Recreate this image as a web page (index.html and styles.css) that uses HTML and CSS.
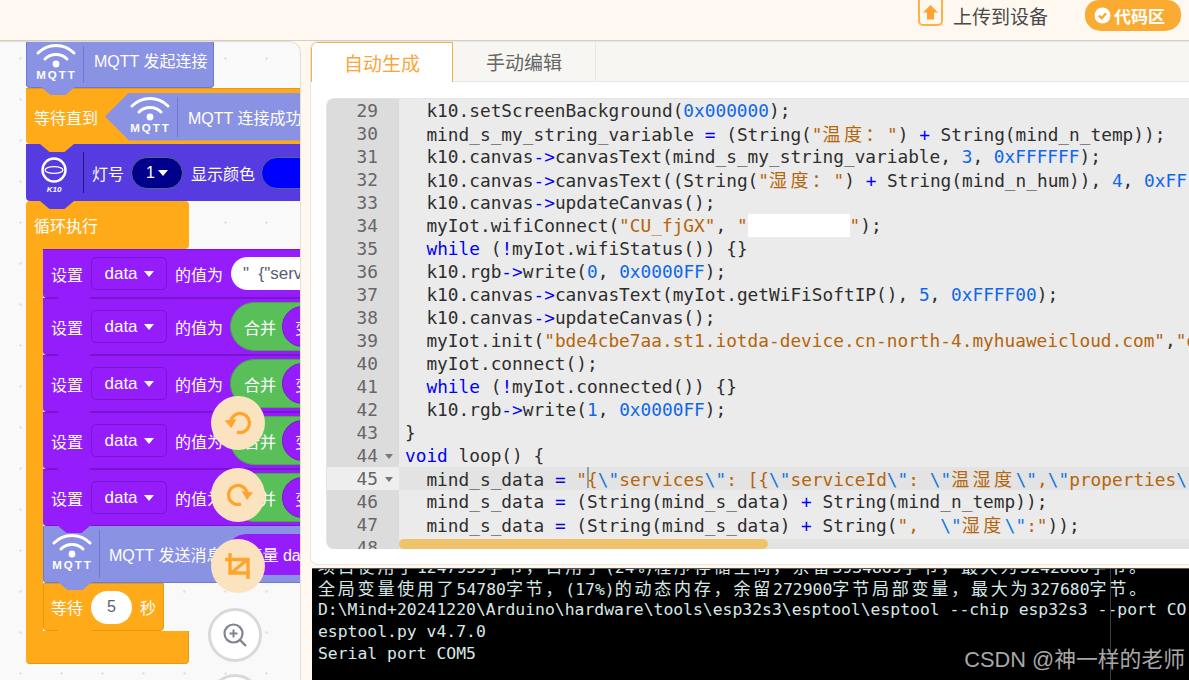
FILE: index.html

```html
<!DOCTYPE html>
<html lang="zh-CN">
<head>
  <meta charset="UTF-8" />
  <title>Mind+ 代码区</title>
  <link rel="stylesheet" href="styles.css">
</head>
<body>
  <svg class="defs" width="0" height="0">
    <symbol id="mqtt" viewBox="0 0 46 46">
      <path d="M5 12 C15 2 31 2 41 12" fill="none" stroke="#fff" stroke-width="3" stroke-linecap="round"/>
      <path d="M12 18 C18 12 28 12 34 18" fill="none" stroke="#fff" stroke-width="3" stroke-linecap="round"/>
      <circle cx="23" cy="23" r="3.4" fill="#fff"/>
      <text x="23.5" y="38" text-anchor="middle" class="mqtt-label">MQTT</text>
    </symbol>
  </svg>

  <header class="topbar">
    <div class="upload">
      <span class="upload-icon">
        <svg width="17" height="17" viewBox="0 0 17 17"><path d="M8.5 1 L16 8.5 H12 V15.5 H5 V8.5 H1 Z" fill="#ffa230"/></svg>
      </span>
      上传到设备
    </div>
    <div class="code-pill">
      <svg width="17" height="17" viewBox="0 0 17 17"><circle cx="8.5" cy="8.5" r="8" fill="#fff"/><path d="M4.8 8.6 L7.6 11.2 L12 6.4" fill="none" stroke="#fbab32" stroke-width="2.4"/></svg>
      代码区
    </div>
  </header>

  <main class="main">
    <section class="workspace">
      <div class="block mqtt-block first-block">
        <svg class="mqtt-icon" width="46" height="46"><use href="#mqtt"/></svg>
        <span class="sep"></span>
        <span class="first-label">MQTT 发起连接</span>
      </div>
      <div class="block wait-until">
        <span>等待直到</span>
        <div class="hex">
          <svg class="mqtt-icon" width="46" height="46"><use href="#mqtt"/></svg>
          <span class="sep"></span>
          <span>MQTT 连接成功</span>
        </div>
      </div>
      <div class="block k10-block">
        <div class="k10-icon">
          <svg width="28" height="28" viewBox="0 0 28 28">
            <circle cx="14" cy="14" r="11.5" fill="none" stroke="#fff" stroke-width="2.4"/>
            <ellipse cx="14" cy="14" rx="9" ry="3.4" fill="none" stroke="#fff" stroke-width="1.2"/>
          </svg>
          <i>K10</i>
        </div>
        <span class="sep dark"></span>
        <span>灯号</span>
        <span class="num-drop">1 <em class="caret"></em></span>
        <span>显示颜色</span>
        <span class="color-pill"></span>
      </div>

      <div class="loop">
        <div class="block loop-head">循环执行</div>
        <div class="loop-body">
          <div class="block set-block set-first">
            <span>设置</span>
            <span class="var-drop">data <em class="caret"></em></span>
            <span>的值为</span>
            <span class="text-pill">"&nbsp;&nbsp;{"services</span>
          </div>
          <div class="block set-block">
            <span>设置</span>
            <span class="var-drop">data <em class="caret"></em></span>
            <span>的值为</span>
            <span class="join"><span>合并</span><span class="join-var">变量</span></span>
          </div>
          <div class="block set-block">
            <span>设置</span>
            <span class="var-drop">data <em class="caret"></em></span>
            <span>的值为</span>
            <span class="join"><span>合并</span><span class="join-var">变量</span></span>
          </div>
          <div class="block set-block">
            <span>设置</span>
            <span class="var-drop">data <em class="caret"></em></span>
            <span>的值为</span>
            <span class="join"><span>合并</span><span class="join-var">变量</span></span>
          </div>
          <div class="block set-block">
            <span>设置</span>
            <span class="var-drop">data <em class="caret"></em></span>
            <span>的值为</span>
            <span class="join"><span>合并</span><span class="join-var">变量</span></span>
          </div>
          <div class="block mqtt-block send-block">
            <svg class="mqtt-icon" width="46" height="46"><use href="#mqtt"/></svg>
            <span class="sep"></span>
            <span>MQTT 发送消息</span>
            <span class="send-var">变量 data</span>
          </div>
          <div class="block wait-block">
            <span>等待</span>
            <span class="num-pill">5</span>
            <span>秒</span>
          </div>
        </div>
        <div class="block loop-foot"></div>
      </div>

      <button class="tool tool-undo">
        <svg width="30" height="30" viewBox="0 0 30 30"><path d="M8 12 A9.5 9.5 0 1 1 14 24" fill="none" stroke="#ffa52e" stroke-width="3.2"/><path d="M1.5 12.5 L8.5 20 L13.5 11 Z" fill="#ffa52e"/></svg>
      </button>
      <button class="tool tool-redo">
        <svg width="30" height="30" viewBox="0 0 30 30"><path d="M24 12 A9.5 9.5 0 1 0 18 24" fill="none" stroke="#ffa52e" stroke-width="3.2"/><path d="M18.5 11 L24 20 L30 12.5 Z" fill="#ffa52e"/></svg>
      </button>
      <button class="tool tool-crop">
        <svg width="30" height="30" viewBox="0 0 30 30"><path d="M7 2 V22 H27 M2 8.5 H25 V28 M8 22 L24 9" fill="none" stroke="#ffa52e" stroke-width="3.4"/></svg>
      </button>
      <button class="tool tool-zoom">
        <svg width="26" height="26" viewBox="0 0 26 26"><circle cx="11.5" cy="11.5" r="9" fill="none" stroke="#7f8590" stroke-width="2.2"/><path d="M18 18 L24 24" stroke="#7f8590" stroke-width="2.4"/><path d="M7.5 11.5 H15.5 M11.5 7.5 V15.5" stroke="#7f8590" stroke-width="2"/></svg>
      </button>
      <button class="tool tool-zoom-out"></button>
    </section>

    <section class="right">
      <div class="editor-panel">
        <div class="tabs">
          <div class="tab tab-active">自动生成</div>
          <div class="tab">手动编辑</div>
        </div>
        <div class="editor-wrap">
          <div class="editor">
            <div class="row"><span class="ln">29</span><span class="tx">  k10.setScreenBackground(<span class="n">0x000000</span>);</span></div>
            <div class="row"><span class="ln">30</span><span class="tx">  mind_s_my_string_variable <span class="o">=</span> (String(<span class="s">"<span class="zh">温度：</span>"</span>) <span class="o">+</span> String(mind_n_temp));</span></div>
            <div class="row"><span class="ln">31</span><span class="tx">  k10.canvas<span class="o">-&gt;</span>canvasText(mind_s_my_string_variable, <span class="n">3</span>, <span class="n">0xFFFFFF</span>);</span></div>
            <div class="row"><span class="ln">32</span><span class="tx">  k10.canvas<span class="o">-&gt;</span>canvasText((String(<span class="s">"<span class="zh">湿度：</span>"</span>) <span class="o">+</span> String(mind_n_hum)), <span class="n">4</span>, <span class="n">0xFF</span></span></div>
            <div class="row"><span class="ln">33</span><span class="tx">  k10.canvas<span class="o">-&gt;</span>updateCanvas();</span></div>
            <div class="row"><span class="ln">34</span><span class="tx">  myIot.wifiConnect(<span class="s">"CU_fjGX"</span>, <span class="s">"<span class="redact"></span>"</span>);</span></div>
            <div class="row"><span class="ln">35</span><span class="tx">  <span class="k">while</span> (<span class="o">!</span>myIot.wifiStatus()) {}</span></div>
            <div class="row"><span class="ln">36</span><span class="tx">  k10.rgb<span class="o">-&gt;</span>write(<span class="n">0</span>, <span class="n">0x0000FF</span>);</span></div>
            <div class="row"><span class="ln">37</span><span class="tx">  k10.canvas<span class="o">-&gt;</span>canvasText(myIot.getWiFiSoftIP(), <span class="n">5</span>, <span class="n">0xFFFF00</span>);</span></div>
            <div class="row"><span class="ln">38</span><span class="tx">  k10.canvas<span class="o">-&gt;</span>updateCanvas();</span></div>
            <div class="row"><span class="ln">39</span><span class="tx">  myIot.init(<span class="s">"bde4cbe7aa.st1.iotda-device.cn-north-4.myhuaweicloud.com"</span>,<span class="s">"d</span></span></div>
            <div class="row"><span class="ln">40</span><span class="tx">  myIot.connect();</span></div>
            <div class="row"><span class="ln">41</span><span class="tx">  <span class="k">while</span> (<span class="o">!</span>myIot.connected()) {}</span></div>
            <div class="row"><span class="ln">42</span><span class="tx">  k10.rgb<span class="o">-&gt;</span>write(<span class="n">1</span>, <span class="n">0x0000FF</span>);</span></div>
            <div class="row"><span class="ln">43</span><span class="tx">}</span></div>
            <div class="row"><span class="ln fold">44</span><span class="tx"><span class="k">void</span> loop() {</span></div>
            <div class="row row-active"><span class="ln fold">45</span><span class="tx">  mind_s_data <span class="o">=</span> <span class="s">"<span class="cursor"></span>{<span class="e">\"</span>services<span class="e">\"</span>: [{<span class="e">\"</span>serviceId<span class="e">\"</span>: <span class="e">\"</span><span class="zh">温湿度</span><span class="e">\"</span>,<span class="e">\"</span>properties<span class="e">\</span></span></span></div>
            <div class="row"><span class="ln">46</span><span class="tx">  mind_s_data <span class="o">=</span> (String(mind_s_data) <span class="o">+</span> String(mind_n_temp));</span></div>
            <div class="row"><span class="ln">47</span><span class="tx">  mind_s_data <span class="o">=</span> (String(mind_s_data) <span class="o">+</span> String(<span class="s">",  <span class="e">\"</span><span class="zh">湿度</span><span class="e">\"</span>:"</span>));</span></div>
            <div class="row"><span class="ln">48</span><span class="tx">  mind_s_data <span class="o">=</span> (String(mind_s_data) <span class="o">+</span> String(mind_n_hum));</span></div>
            <div class="scroll-track"><div class="scroll-thumb"></div></div>
          </div>
        </div>
      </div>

      <div class="terminal">
        <div class="term-line term-cut"><span class="zh-t">项目使用了</span>1247939<span class="zh-t">字节，占用了</span>(24%)<span class="zh-t">程序存储空间，余留</span>3934869<span class="zh-t">字节，最大为</span>5242880<span class="zh-t">字节。</span></div>
        <div class="term-line"><span class="zh-t">全局变量使用了</span>54780<span class="zh-t">字节，</span>(17%)<span class="zh-t">的动态内存，余留</span>272900<span class="zh-t">字节局部变量，最大为</span>327680<span class="zh-t">字节。</span></div>
        <div class="term-line">D:\Mind+20241220\Arduino\hardware\tools\esp32s3\esptool\esptool --chip esp32s3 --port CO</div>
        <div class="term-line">esptool.py v4.7.0</div>
        <div class="term-line">Serial port COM5</div>
        <div class="term-scroll"></div>
        <div class="watermark">CSDN @神一样的老师</div>
      </div>
    </section>
  </main>
</body>
</html>
```

FILE: styles.css

```css
* {
  box-sizing: border-box;
}
body {
  margin: 0;
  height: 680px;
  overflow: hidden;
  background: #fef8f1;
  font-family: "Liberation Sans", "Noto Sans CJK SC", sans-serif;
}
.defs {
  display: block;
  height: 0;
}
.mqtt-label {
  font-family: "Liberation Sans", sans-serif;
  font-size: 11.5px;
  font-weight: bold;
  letter-spacing: 2px;
  fill: #fff;
}

/* top bar */
.topbar {
  height: 41px;
  border-bottom: 1px solid #d2cec8;
  display: flex;
  justify-content: flex-end;
  align-items: flex-start;
  padding-right: 8px;
}
.upload {
  display: flex;
  align-items: center;
  gap: 10px;
  height: 30px;
  font-size: 19px;
  color: #4a4a4a;
  margin-right: 37px;
}
.upload-icon {
  width: 25px;
  height: 26px;
  margin-top: -4px;
  border: 2px solid #ffb347;
  border-top: 0;
  border-radius: 0 0 5px 5px;
  display: flex;
  align-items: center;
  justify-content: center;
}
.code-pill {
  width: 96px;
  height: 31px;
  background: #fbab32;
  border-radius: 14px 14px 16px 16px / 14px 14px 15px 15px;
  color: #fff;
  font-size: 17px;
  font-weight: bold;
  display: flex;
  align-items: center;
  justify-content: flex-start;
  padding-left: 9px;
  gap: 3px;
}

.main {
  display: flex;
  height: 639px;
}

/* block area */
.workspace {
  position: relative;
  width: 301px;
  flex: none;
  overflow: hidden;
  padding: 0 0 0 26px;
  background-color: #f9f9f9;
  background-image: radial-gradient(circle, #e4e4e4 1px, transparent 1.5px);
  background-size: 41px 41px;
  background-position: 0 -4px;
  border-right: 1px solid #e7dfd5;
  border-top: 1px solid #e7dfd5;
  border-top-right-radius: 12px;
}
.block {
  position: relative;
  display: flex;
  align-items: center;
  color: #fff;
  font-size: 16px;
  white-space: nowrap;
  width: max-content;
  min-width: 300px;
  border-radius: 0 0 4px 4px;
}
.block::after {
  content: "";
  position: absolute;
  z-index: 2;
  left: 14px;
  bottom: -8px;
  width: 34px;
  height: 8px;
  background: inherit;
  clip-path: polygon(0 0, 100% 0, 72% 100%, 28% 100%);
}
.sep {
  width: 1px;
  align-self: stretch;
  margin: 4px 10px 4px 4px;
  background: #7078d2;
}
.sep.dark {
  background: #1e1480;
  margin: 8px 0 8px 0;
}
.mqtt-block {
  background: #8a92e4;
  border: 1px solid #7179cf;
  border-top: 0;
}
.mqtt-icon {
  flex: none;
}
.first-block {
  width: 188px;
  min-width: 0;
  height: 46px;
  padding-left: 6px;
}
.first-block .mqtt-icon {
  margin-top: -2px;
}
.first-label {
  padding-bottom: 10px;
}
.wait-until {
  background: #ffab19;
  height: 56px;
  padding-left: 8px;
  border-top: 1px solid #e59a14;
}
.hex {
  display: flex;
  align-items: center;
  height: 48px;
  margin-left: 7px;
  padding-left: 22px;
  padding-right: 20px;
  background: #8a92e4;
  clip-path: polygon(24px 0, 100% 0, 100% 100%, 24px 100%, 0 50%);
}
.k10-block {
  background: #563ce0;
  height: 57px;
  padding-left: 14px;
  gap: 8px;
}
.k10-icon {
  width: 28px;
  margin-right: 7px;
  display: flex;
  flex-direction: column;
  align-items: center;
  padding-top: 5px;
}
.k10-icon i {
  font-size: 8px;
  font-weight: bold;
  line-height: 11px;
}
.caret {
  display: inline-block;
  width: 0;
  height: 0;
  margin-left: 3px;
  vertical-align: 2px;
  border-left: 5px solid transparent;
  border-right: 5px solid transparent;
  border-top: 6px solid #fff;
}
.num-drop {
  width: 52px;
  height: 32px;
  border-radius: 16px;
  background: #00008b;
  border: 1px solid #4f6a80;
  display: flex;
  align-items: center;
  justify-content: center;
  margin-left: -1px;
}
.color-pill {
  width: 60px;
  height: 32px;
  margin-left: -2px;
  border-radius: 16px;
  background: #0000ff;
  border: 1px solid #4f6a80;
}
.loop-head {
  background: #ffab19;
  width: 163px;
  min-width: 0;
  height: 48px;
  padding-left: 8px;
  border-radius: 4px 4px 4px 0;
  align-items: center;
}
.loop-head::after {
  display: none;
}
.loop-body {
  border-left: 17px solid #ffab19;
}
.loop-foot {
  background: #ffab19;
  width: 163px;
  min-width: 0;
  height: 33px;
  border-right: 1px solid #e59a14;
  border-bottom: 1px solid #e59a14;
}
.loop-foot::after {
  display: none;
}
.set-block {
  background: #951cfb;
  height: 57px;
  padding-left: 8px;
  border-top: 1px solid #7a16d0;
  border-bottom: 1px solid #7a16d0;
}
.set-first {
  height: 49px;
}
.var-drop {
  width: 76px;
  height: 33px;
  margin: 0 8px;
  border: 1px solid #7a16d0;
  border-radius: 5px;
  font-size: 17px;
  display: flex;
  align-items: center;
  justify-content: center;
  gap: 3px;
}
.text-pill {
  height: 33px;
  margin-left: 8px;
  padding: 0 14px 0 12px;
  background: #fff;
  color: #575e75;
  font-size: 17px;
  border-radius: 17px;
  display: flex;
  align-items: center;
}
.join {
  height: 49px;
  margin-left: 7px;
  padding: 0 4px 0 13px;
  background: #59c059;
  border: 1px solid #4aa84a;
  border-radius: 25px;
  display: flex;
  align-items: center;
  gap: 6px;
}
.join-var {
  height: 41px;
  width: 80px;
  padding-left: 12px;
  background: #951cfb;
  border: 1px solid #7a16d0;
  border-radius: 21px;
  display: flex;
  align-items: center;
}
.send-block {
  height: 57px;
  padding-left: 5px;
  border: 1px solid #7179cf;
  border-top: 0;
  background: #8a92e4;
}
.send-block .sep {
  margin-right: 9px;
}
.send-var {
  height: 41px;
  margin-left: 4px;
  padding: 0 20px;
  background: #951cfb;
  border-radius: 21px;
  display: flex;
  align-items: center;
}
.wait-block {
  background: #ffab19;
  width: 121px;
  min-width: 0;
  height: 48px;
  padding-left: 7px;
  gap: 8px;
  border: 1px solid #e59a14;
}
.num-pill {
  width: 41px;
  height: 33px;
  background: #fff;
  color: #575e75;
  border-radius: 17px;
  display: flex;
  align-items: center;
  justify-content: center;
}

/* round tools over the blocks */
.tool {
  position: absolute;
  z-index: 3;
  width: 54px;
  height: 54px;
  padding: 0;
  border: 0;
  border-radius: 50%;
  background: #fbe3c0;
  display: flex;
  align-items: center;
  justify-content: center;
}
.tool-undo {
  left: 211px;
  top: 354px;
}
.tool-redo {
  left: 211px;
  top: 426px;
}
.tool-crop {
  left: 211px;
  top: 497px;
}
.tool-zoom {
  left: 208px;
  top: 566px;
  background: #fff;
  border: 3px solid #d9d9d9;
}
.tool-zoom-out {
  left: 208px;
  top: 632px;
  background: #fff;
  border: 3px solid #d9d9d9;
}

/* code editor */
.right {
  flex: 1;
  min-width: 0;
  padding-left: 9px;
}
.editor-panel {
  height: 524px;
  background: #fff;
  border: 1px solid #ebe5dc;
  border-right: 0;
  border-radius: 8px 0 0 8px;
  overflow: hidden;
}
.tabs {
  height: 40px;
  display: flex;
  background: #f8f6f3;
  border-bottom: 1px solid #e6e6e6;
}
.tab {
  width: 143px;
  height: 39px;
  font-size: 19px;
  color: #666;
  display: flex;
  align-items: center;
  justify-content: center;
  border-right: 1px solid #e8e8e8;
}
.tab-active {
  width: 142px;
  height: 40px;
  background: #fff;
  color: #f9a63a;
  border: 1px solid #f3b050;
  border-bottom: 0;
  border-radius: 6px 0 0 0;
}
.editor-wrap {
  padding: 16px 0 0 15px;
}
.editor {
  position: relative;
  height: 451px;
  overflow: hidden;
  background: #ebebeb;
  border-top: 1px solid #e4e4e4;
  border-left: 1px solid #e4e4e4;
  border-radius: 8px 0 0 8px;
  font-family: "DejaVu Sans Mono", monospace;
  font-size: 17.8px;
  color: #2e2e2e;
}
.row {
  display: flex;
  height: 23px;
  line-height: 23px;
  white-space: pre;
}
.ln {
  flex: none;
  width: 72px;
  padding-right: 21px;
  text-align: right;
  color: #666;
  background: #dcdcdc;
  position: relative;
}
.fold::after {
  content: "";
  position: absolute;
  right: 6px;
  top: 10px;
  border-left: 4px solid transparent;
  border-right: 4px solid transparent;
  border-top: 5px solid #777;
}
.tx {
  padding-left: 6px;
}
.row-active {
  background: #e3e3e3;
}
.row-active .ln {
  background: #eeeeee;
}
.k,
.o {
  color: #0000ff;
}
.n {
  color: #1068e8;
}
.s {
  color: #b5650a;
}
.e {
  color: #1278e0;
}
.zh {
  font-family: "Noto Sans CJK SC", sans-serif;
  font-size: 18px;
  letter-spacing: 3.5px;
}
.redact {
  display: inline-block;
  width: 102px;
  height: 23px;
  vertical-align: top;
  background: #fff;
}
.cursor {
  display: inline-block;
  width: 2px;
  height: 21px;
  margin-right: -2px;
  vertical-align: top;
  background: #9a9a9a;
}
.scroll-track {
  position: absolute;
  left: 72px;
  right: 0;
  bottom: 0;
  height: 10px;
  background: #e3e3e1;
}
.scroll-thumb {
  width: 369px;
  height: 100%;
  background: #eec36c;
  border-radius: 5px;
}

/* compile output */
.terminal {
  position: relative;
  height: 112px;
  margin: 3px 0 0 2px;
  padding: 0 0 0 6px;
  overflow: hidden;
  background: #000;
  border-top: 1px solid #555;
  color: #d8e8e8;
  font-family: "DejaVu Sans Mono", monospace;
  font-size: 16.4px;
}
.term-line {
  height: 22px;
  line-height: 22px;
  white-space: pre;
}
.term-cut {
  margin-top: -14px;
}
.zh-t {
  font-family: "Noto Sans CJK SC", sans-serif;
  font-size: 17px;
  letter-spacing: 2.8px;
}
.term-scroll {
  position: absolute;
  left: 798px;
  top: 0;
  bottom: 0;
  width: 1px;
  background: #3c3c3c;
}
.watermark {
  position: absolute;
  right: 4px;
  bottom: 7px;
  color: #a8a8a8;
  font-family: "Liberation Sans", "Noto Sans CJK SC", sans-serif;
  font-size: 21.8px;
  line-height: 26px;
}
```
